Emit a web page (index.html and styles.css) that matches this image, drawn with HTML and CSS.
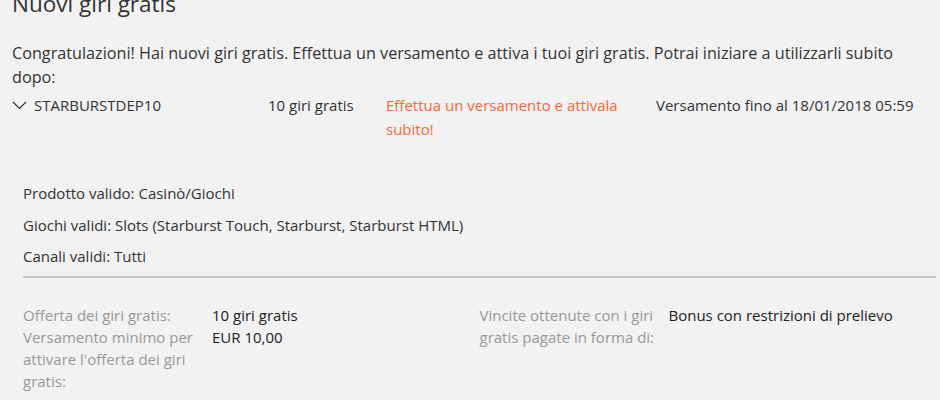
FILE: index.html
```html
<!DOCTYPE html>
<html lang="it">
<head>
    <meta charset="UTF-8">
    <meta name="viewport" content="width=device-width, initial-scale=1.0">
    <title>Nuovi giri gratis</title>
    <link rel="stylesheet" href="styles.css">
</head>
<body>
    <div class="page">
        <h2 class="title">Nuovi giri gratis</h2>
        <p class="intro">Congratulazioni! Hai nuovi giri gratis. Effettua un versamento e attiva i tuoi giri gratis. Potrai iniziare a utilizzarli subito dopo:</p>

        <div class="offer">
            <div class="offer-row">
                <div class="offer-code">
                    <svg class="chevron" width="15" height="9" viewBox="0 0 15 9">
                        <polyline points="1,1 7.5,7.5 14,1" fill="none" stroke="#333" stroke-width="1.2"/>
                    </svg>
                    <span>STARBURSTDEP10</span>
                </div>
                <div class="offer-spins">10 giri gratis</div>
                <div class="offer-action">Effettua un versamento e attivala subito!</div>
                <div class="offer-deadline">Versamento fino al 18/01/2018 05:59</div>
            </div>

            <div class="offer-details">
                <div class="detail">Prodotto valido: Casinò/Giochi</div>
                <div class="detail">Giochi validi: Slots (Starburst Touch, Starburst, Starburst HTML)</div>
                <div class="detail">Canali validi: Tutti</div>

                <div class="terms">
                    <div class="terms-col">
                        <div class="term">
                            <div class="term-label">Offerta dei giri gratis:</div>
                            <div class="term-value">10 giri gratis</div>
                        </div>
                        <div class="term">
                            <div class="term-label">Versamento minimo per attivare l'offerta dei giri gratis:</div>
                            <div class="term-value">EUR 10,00</div>
                        </div>
                    </div>
                    <div class="terms-col">
                        <div class="term">
                            <div class="term-label">Vincite ottenute con i giri gratis pagate in forma di:</div>
                            <div class="term-value">Bonus con restrizioni di prelievo</div>
                        </div>
                    </div>
                </div>
            </div>
        </div>
    </div>
</body>
</html>
```

FILE: styles.css
```css
body {
    margin: 0;
    background-color: #f2f2f2;
    color: #333;
    font-family: "Open Sans", sans-serif;
    font-size: 15px;
}
.page {
    padding: 0 4px 0 12px;
    margin-top: -11px;
}
.title {
    font-size: 22.5px;
    font-weight: normal;
    line-height: 30px;
    margin: 0;
}
.intro {
    font-size: 16.2px;
    line-height: 24px;
    margin: 22px 0 4px;
}
.offer-row {
    display: grid;
    grid-template-columns: 256px 118px 270px 1fr;
    line-height: 24px;
}
.offer-code {
    display: flex;
    align-items: center;
    height: 24px;
}
.chevron {
    margin-right: 7px;
}
.offer-action {
    color: #ff6633;
    padding-right: 20px;
}
.offer-details {
    padding-left: 11px;
    margin-top: 40px;
}
.detail {
    line-height: 24px;
    margin-bottom: 7.5px;
}
.terms {
    border-top: 2px solid #c4c4c4;
    margin-top: 3px;
    padding-top: 26px;
    display: grid;
    grid-template-columns: 1fr 1fr;
}
.term {
    display: flex;
    line-height: 22px;
}
.term-label {
    width: 179px;
    padding-right: 10px;
    color: #999;
    flex-shrink: 0;
}
.term-value {
    color: #222;
}
```
